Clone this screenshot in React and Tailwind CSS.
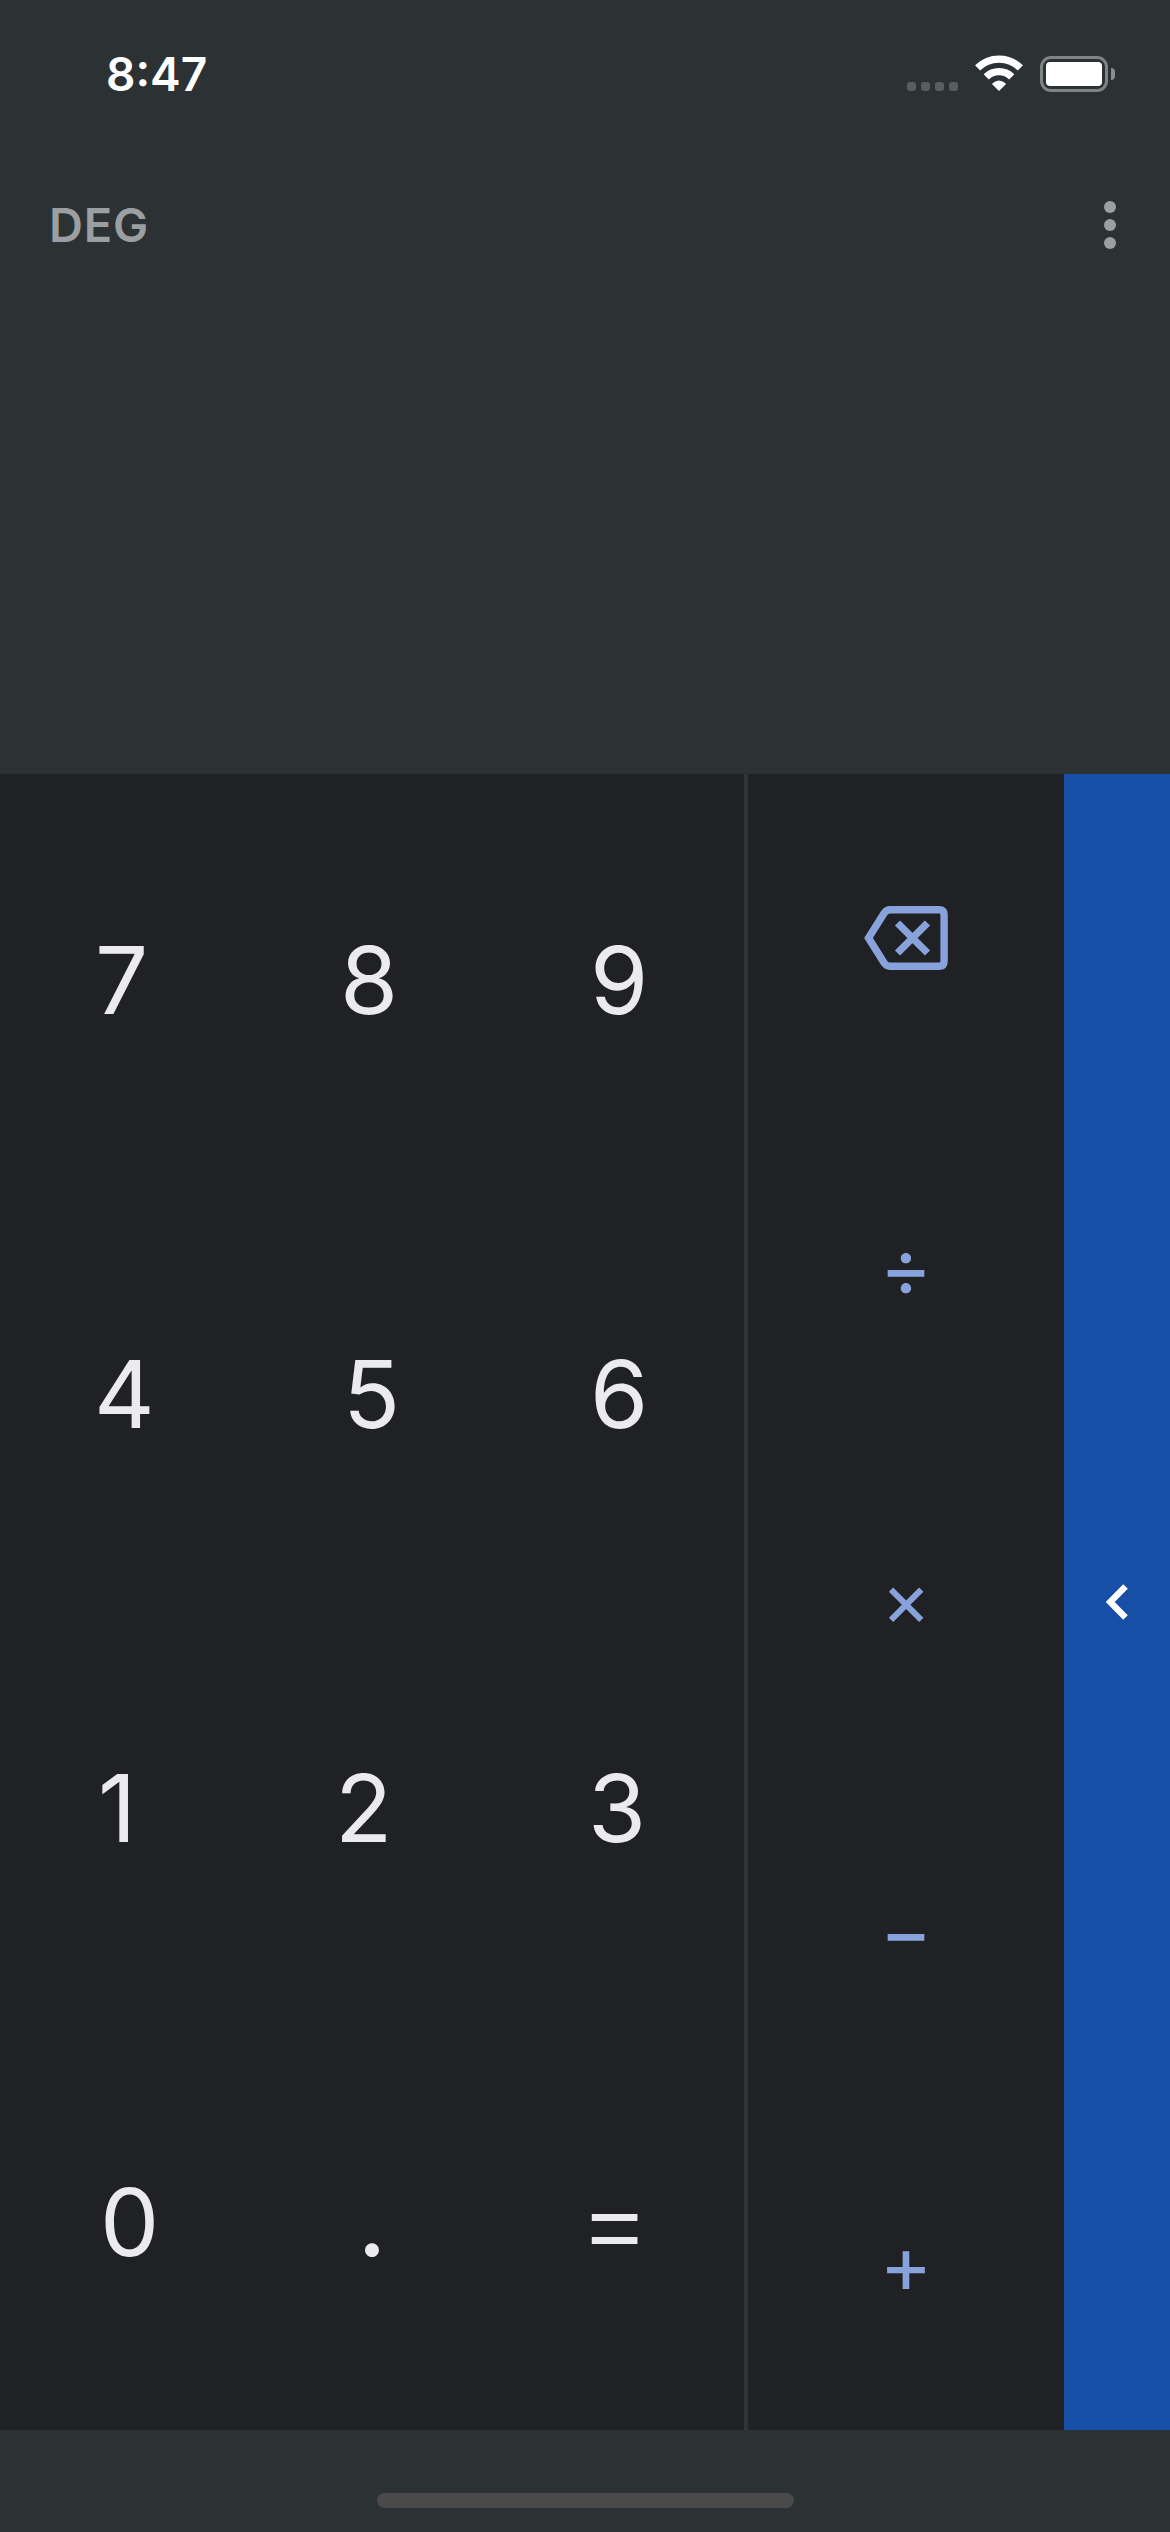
const keys = [
  { label: "7", style: "pb-[2px] pl-[95px]" },
  { label: "8", style: "pb-[2px] pl-[92px]" },
  { label: "9", style: "pb-[2px] pl-[94px]" },
  { label: "4", style: "pb-[2px] pl-[94px]" },
  { label: "5", style: "pb-[2px] pl-[95px]" },
  { label: "6", style: "pb-[2px] pl-[94px]" },
  { label: "1", style: "pb-[2px] pl-[98px]" },
  { label: "2", style: "pb-[2px] pl-[87px]" },
  { label: "3", style: "pb-[2px] pl-[92px]" },
  { label: "0", style: "pb-[2px] pl-[100px]" },
  { label: ".", style: "pb-[10px] pl-[109px] text-[104px]" },
  { label: "=", style: "pb-[6px] pl-[82px] text-[112px] font-light" },
];

function StatusBar() {
  return (
    <div className="flex h-[150px] shrink-0 justify-between pl-[106px] pr-[55px] text-white">
      <div className="mt-[47px] h-[54px] text-[46px] leading-[54px] font-semibold">8:47</div>
      <div className="mt-[54px] flex h-[39px] items-start">
        <div className="mr-[17px] mt-[28px] flex gap-[5px]">
          <span className="size-[9px] rounded-[3px] bg-[#5a5d5f]" />
          <span className="size-[9px] rounded-[3px] bg-[#5a5d5f]" />
          <span className="size-[9px] rounded-[3px] bg-[#5a5d5f]" />
          <span className="size-[9px] rounded-[3px] bg-[#5a5d5f]" />
        </div>
        <svg className="mr-[17px] mt-px h-[36px] w-[48px]" viewBox="0 0 48 36" fill="none">
          <path d="M2.6 12.9 A30.3 30.3 0 0 1 45.4 12.9" stroke="#fff" strokeWidth="7.2" />
          <path d="M11.2 21.9 A18.1 18.1 0 0 1 36.8 21.9" stroke="#fff" strokeWidth="7.2" />
          <path d="M24 36 L17.4 29.4 Q17 28.8 17.6 28.2 Q24 22.8 30.4 28.2 Q31 28.8 30.6 29.4 Z" fill="#fff" />
        </svg>
        <div className="mt-[2px] flex items-center gap-[3px]">
          <div className="h-[36px] w-[68px] rounded-[11px] border-[3px] border-[#818486] p-[3px]">
            <div className="h-full rounded-[4px] bg-white" />
          </div>
          <div className="h-[12px] w-[4px] rounded-r-full bg-[#8b8e8f]" />
        </div>
      </div>
    </div>
  );
}

function Operators() {
  return (
    <div className="grid w-[316px] grid-rows-5 text-center text-[80px] leading-[90px] text-[#88a3dc]">
      <button className="flex items-center justify-center pb-[3px]">
        <svg className="h-[64px] w-[84px]" viewBox="0 0 84 64" fill="none" stroke="#88a3dc" strokeWidth="7.4">
          <path d="M26 3.7 H75 Q80.1 3.7 80.1 8.8 V55.2 Q80.1 60.3 75 60.3 H26 Q22.5 60.3 20.2 57 L4.5 32 L20.2 7 Q22.5 3.7 26 3.7 Z" />
          <path d="M33.5 17 L63.5 47 M63.5 17 L33.5 47" />
        </svg>
      </button>
      <button className="pb-[7px]">÷</button>
      <button className="pb-[5px] text-[75px]">×</button>
      <button className="pb-[4px]">−</button>
      <button className="pb-px">+</button>
    </div>
  );
}

export default function App() {
  return (
    <div className="flex h-[2532px] w-[1170px] flex-col overflow-hidden bg-[#2c3133] font-['Inter',sans-serif]">
      <StatusBar />
      <header className="flex h-[624px] shrink-0 justify-between pl-[49px] pr-[54px] text-[#9b9fa2]">
        <div className="mt-[48px] h-[54px] text-[47px] leading-[54px] font-semibold tracking-[0.8px]">DEG</div>
        <button className="mt-[51px] flex h-[48px] flex-col gap-[6px]">
          <span className="size-[12px] rounded-full bg-[#9b9fa2]" />
          <span className="size-[12px] rounded-full bg-[#9b9fa2]" />
          <span className="size-[12px] rounded-full bg-[#9b9fa2]" />
        </button>
      </header>
      <main className="flex h-[1656px] shrink-0 bg-[#202124]">
        <div className="grid w-[744px] grid-cols-3 grid-rows-4 text-[94px] leading-[110px] text-[#ebeaef]">
          {keys.map((key) => (
            <button key={key.label} className={`text-left leading-[110px] ${key.style}`}>
              {key.label}
            </button>
          ))}
        </div>
        <div className="w-[4px] bg-[#323334]" />
        <Operators />
        <button className="flex flex-1 items-center justify-center bg-[#174ea6]">
          <svg className="h-[36px] w-[24px]" viewBox="0 0 24 36" fill="none" stroke="#fff" strokeWidth="6.4" strokeLinejoin="miter">
            <path d="M20.5 2.4 L5.2 18 L20.5 33.6" />
          </svg>
        </button>
      </main>
      <footer className="flex flex-1 justify-center pt-[63px]">
        <div className="h-[15px] w-[417px] rounded-full bg-[#4a4a4a]" />
      </footer>
    </div>
  );
}
